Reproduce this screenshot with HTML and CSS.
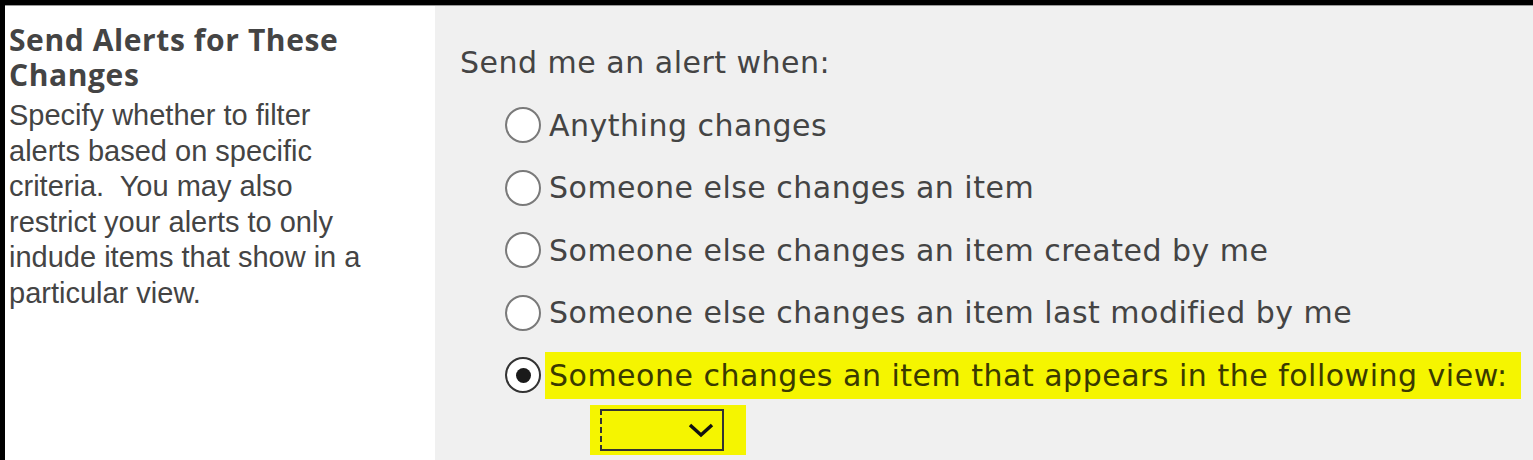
FILE: index.html
```html
<!DOCTYPE html>
<html>
<head>
<meta charset="utf-8">
<link rel="stylesheet" href="styles.css">
</head>
<body>
<div class="frame">
  <div class="topline"></div>
  <div class="row">
    <div class="left">
      <h3 class="title">Send Alerts for These Changes</h3>
      <p class="desc">Specify whether to filter alerts based on specific criteria.&nbsp; You may also restrict your alerts to only indude items that show in a particular view.</p>
    </div>
    <div class="right">
      <div class="lead">Send me an alert when:</div>
      <div class="opts">
        <label class="opt"><span class="radio"></span><span class="txt">Anything changes</span></label>
        <label class="opt"><span class="radio"></span><span class="txt">Someone else changes an item</span></label>
        <label class="opt"><span class="radio"></span><span class="txt">Someone else changes an item created by me</span></label>
        <label class="opt"><span class="radio"></span><span class="txt">Someone else changes an item last modified by me</span></label>
        <label class="opt"><span class="radio checked"></span><span class="txt hl">Someone changes an item that appears in the following view:</span></label>
        <div class="selrow">
          <span class="selhl"><span class="select"><svg class="chev" viewBox="0 0 30 20" width="30" height="20"><path d="M4 5 L15 15 L26 5" fill="none" stroke="#111" stroke-width="3.5"/></svg></span></span>
        </div>
      </div>
    </div>
  </div>
</div>
</body>
</html>
```

FILE: styles.css
```css
html, body {
  margin: 0;
  padding: 0;
  background: #f0f0f0;
}
.frame {
  border-top: 5px solid #000;
  border-left: 5px solid #000;
  height: 460px;
  box-sizing: border-box;
  display: flex;
  flex-direction: column;
}
.topline {
  height: 1px;
  background: #9a9a9a;
}
.row {
  display: flex;
  flex: 1;
}
.left {
  width: 430px;
  background: #fff;
  padding: 16px 0 0 4px;
  box-sizing: border-box;
  color: #444;
}
.title {
  margin: 0;
  width: 360px;
  font-family: "Open Sans", "DejaVu Sans", sans-serif;
  font-weight: 700;
  font-size: 30px;
  letter-spacing: 0.6px;
  line-height: 35px;
  color: #444;
}
.desc {
  margin: 6px 0 0 0;
  font-family: "Liberation Sans", Arial, sans-serif;
  font-size: 29px;
  line-height: 35.5px;
  width: 372px;
  color: #444;
}
.right {
  flex: 1;
  padding: 39px 0 0 25px;
  font-family: "DejaVu Sans", Verdana, sans-serif;
  color: #444;
  letter-spacing: 0.5px;
}
.lead {
  font-size: 30px;
  line-height: 36px;
}
.opts {
  padding-left: 45px;
  margin-top: 13px;
}
.opt {
  display: flex;
  align-items: center;
  height: 62.5px;
  font-size: 30px;
}
.radio {
  width: 32px;
  height: 32px;
  border: 2px solid #7a7a7a;
  border-radius: 50%;
  background: #fff;
  flex: none;
  margin-right: 8px;
  display: flex;
  align-items: center;
  justify-content: center;
}
.radio.checked {
  border-color: #333;
}
.radio.checked::after {
  content: "";
  width: 15px;
  height: 15px;
  border-radius: 50%;
  background: #1a1a1a;
}
.txt.hl {
  background: #f5f500;
  color: #3a3a00;
  margin-left: -4px;
  padding: 6px 13px 6px 4px;
}
.selrow {
  padding-left: 85px;
  margin-top: -2px;
}
.selhl {
  display: inline-block;
  background: #f5f500;
  padding: 4px 22px 4px 10px;
}
.select {
  display: flex;
  align-items: center;
  justify-content: flex-end;
  height: 42px;
  border: 2px solid #333;
  border-left-style: dashed;
  padding-right: 6px;
  box-sizing: border-box;
  width: 124px;
}
.chev {
  display: block;
}
```
